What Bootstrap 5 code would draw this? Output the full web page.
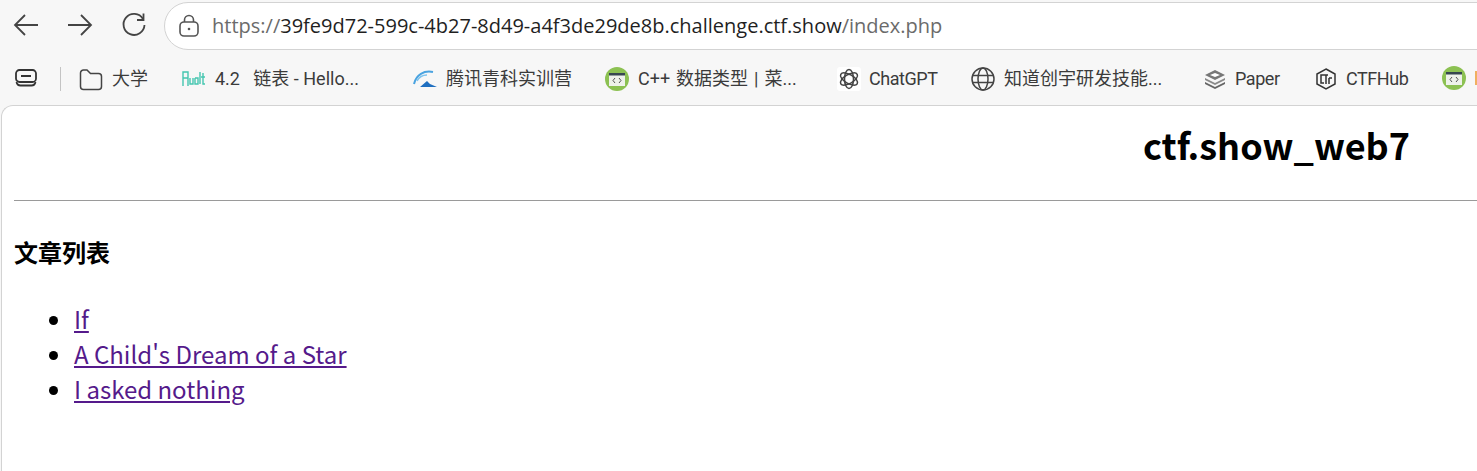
<!DOCTYPE html>
<html lang="zh">
<head>
    <meta charset="UTF-8">
    <meta name="viewport" content="width=device-width, initial-scale=1.0">
    <title>ctf.show_web7</title>
    <link href="https://cdn.jsdelivr.net/npm/bootstrap@5.3.0/dist/css/bootstrap.min.css" rel="stylesheet">
    <style>
        html, body { height: 100%; overflow: hidden; }
        body { background: #f7f7f7; font-family: "Open Sans", "Noto Sans CJK SC", sans-serif; }
        .top-bar { height: 50px; padding-left: 12px; }
        .nav-ico { width: 28px; height: 28px; margin-right: 26px; flex: none; }
        .addr-box { height: 48px; margin: 1px -40px 0 -1px; padding-left: 13px; flex: 1; background: #fff; border: 1px solid #d3d3d3; border-radius: 24px; font-size: 20px; color: #1f1f1f; white-space: nowrap; }
        .addr-dim { color: #6b6b6b; }
        .mark-bar { height: 55px; font-size: 18px; color: #3b3b3b; white-space: nowrap; padding-bottom: 6px; font-family: Roboto, "Noto Sans CJK SC", sans-serif; }
        .mark-item { position: absolute; top: 66px; display: flex; align-items: center; gap: 9px; line-height: 26px; }
        .mark-item svg { width: 24px; height: 24px; flex: none; }
        .mark-tight { letter-spacing: -.45px; gap: 8px; }
        .mark-wide { word-spacing: 1.5px; }
        .mark-sep { position: absolute; left: 60px; top: 67px; width: 1px; height: 24px; background: #c4c4c4; }
        .mark-sliver { width: 2px; height: 14px; background: #f0b060; }
        .page-sheet { height: 366px; background: #fff; border: 1px solid #d3d3d3; border-width: 1px 0 0 1px; border-top-left-radius: 12px; margin-left: 1px; color: #000; font-family: "Noto Sans CJK SC", sans-serif; padding: 0 0 0 12px; }
        .site-title { font-size: 36px; font-weight: 700; line-height: 52px; margin: 12px 67px 0 0; text-align: right; }
        .site-rule { margin: 30px 0 0; border: 0; border-top: 1px solid #9a9a9a; opacity: 1; }
        .list-title { font-size: 24px; font-weight: 700; line-height: 35px; margin: 33px 0 0; }
        .post-list { margin: 32px 0 0; padding-left: 60px; font-size: 24px; line-height: 35px; }
        .post-list a { color: #551a8b; }
    </style>
</head>
<body>
    <!-- browser toolbar -->
    <div class="top-bar d-flex align-items-center">
        <svg class="nav-ico" viewBox="0 0 28 28" fill="none" stroke="#444" stroke-width="1.8"><path d="M26 14H3M13 4L3 14l10 10"/></svg>
        <svg class="nav-ico" viewBox="0 0 28 28" fill="none" stroke="#444" stroke-width="1.8"><path d="M2 14h23M15 4l10 10-10 10"/></svg>
        <svg class="nav-ico" viewBox="0 0 28 28" fill="none" stroke="#444" stroke-width="1.8" style="margin-right:17px"><path d="M23 8a10.500 10.500 0 1 0 1.500 6"/><path d="M23.500 2.500V9H17"/></svg>
        <div class="addr-box d-flex align-items-center">
            <svg width="22" height="24" viewBox="0 0 22 24" fill="none" stroke="#555" stroke-width="1.6" class="me-2"><rect x="2" y="8" width="18" height="14" rx="4"/><path d="M6.500 8V6a4.500 4.500 0 0 1 9 0v2"/><circle cx="11" cy="15" r="1.300" fill="#555" stroke="none"/></svg>
            <span class="ms-1"><span class="addr-dim">https://</span>39fe9d72-599c-4b27-8d49-a4f3de29de8b.challenge.ctf.show<span class="addr-dim">/index.php</span></span>
        </div>
    </div>

    <!-- bookmarks -->
    <div class="mark-bar">
        <div class="mark-item" style="left:14px"><svg viewBox="0 0 24 24" fill="none" stroke="#333" stroke-width="1.800"><rect x="2" y="4" width="20" height="12" rx="3.500"/><path d="M7 10h10" stroke-width="2"/><path d="M2.500 16c.5 2.500 2 3.500 4 3.500h11c2 0 3.500-1 4-3.500"/></svg></div>
        <div class="mark-sep"></div>
        <div class="mark-item" style="left:79px"><svg viewBox="0 0 24 24" fill="none" stroke="#444" stroke-width="1.500"><path d="M1.500 6a3 3 0 0 1 3-3h3.500l3.500 3.500h8a3 3 0 0 1 3 3v10a3 3 0 0 1-3 3h-15a3 3 0 0 1-3-3z"/></svg>大学</div>
        <div class="mark-item" style="left:182px"><svg viewBox="0 0 24 24" fill="none" stroke="#45c6b0" stroke-width="1.400"><path d="M1 19V5h5v14M1 11h5M8 11v6h3v-6M13 11v6h3v-6h-3M18 5v12M21 6v11h2M19 10h4"/></svg>4.2 &nbsp; 链表 - Hello...</div>
        <div class="mark-item" style="left:413px"><svg viewBox="0 0 24 24" fill="none"><path d="M1 17C3 8 11 3 20 5" stroke="#4aa3e0" stroke-width="2"/><path d="M4 14C6 10 10 8 14 8" stroke="#7fc4ee" stroke-width="1.500"/><path d="M7 20l7-6 3 3 7 3z" fill="#1f6fc0"/></svg>腾讯青科实训营</div>
        <div class="mark-item mark-wide" style="left:605px"><svg viewBox="0 0 24 24"><circle cx="12" cy="12" r="12" fill="#8cc152"/><rect x="4" y="6" width="16" height="13" fill="#eef2ea"/><rect x="4" y="6" width="16" height="2.500" fill="#37474f"/><path d="M10 11l-2 2.500 2 2.500M14 11l2 2.500-2 2.500" fill="none" stroke="#555"/></svg>C++ 数据类型 | 菜...</div>
        <div class="mark-item mark-tight" style="left:837px"><svg viewBox="0 0 24 24"><rect width="24" height="24" rx="3" fill="#fff"/><g fill="none" stroke="#444" stroke-width="1.500"><ellipse cx="12" cy="12" rx="4.500" ry="9.500"/><ellipse cx="12" cy="12" rx="4.500" ry="9.500" transform="rotate(60 12 12)"/><ellipse cx="12" cy="12" rx="4.500" ry="9.500" transform="rotate(120 12 12)"/></g></svg>ChatGPT</div>
        <div class="mark-item" style="left:971px"><svg viewBox="0 0 24 24" fill="none" stroke="#444" stroke-width="1.500"><circle cx="12" cy="12" r="11"/><ellipse cx="12" cy="12" rx="5" ry="11"/><path d="M1.500 8.500h21M1.500 15.500h21"/></svg>知道创宇研发技能...</div>
        <div class="mark-item mark-tight" style="left:1203px"><svg viewBox="0 0 24 24"><path d="M12 3l10 5-10 5-10-5z" fill="#777"/><path d="M2 11l10 5 10-5v2l-10 5-10-5z" fill="#8a8a8a"/><path d="M2 15l10 5 10-5v2l-10 5-10-5z" fill="#666"/><path d="M7 8l5-2 5 2-5 2z" fill="#fff"/></svg>Paper</div>
        <div class="mark-item mark-tight" style="left:1314px"><svg viewBox="0 0 24 24" fill="none" stroke="#333" stroke-width="1.500"><path d="M12 2l9 5v10l-9 5-9-5V7z"/><path d="M11 8H7v8h3M9 8h5M12 8v9M15 11h3M15 11v6"/></svg>CTFHub</div>
        <div class="mark-item" style="left:1442px"><svg viewBox="0 0 24 24"><circle cx="12" cy="12" r="12" fill="#8cc152"/><rect x="4" y="6" width="16" height="13" fill="#eef2ea"/><rect x="4" y="6" width="16" height="2.500" fill="#37474f"/><path d="M10 11l-2 2.500 2 2.500M14 11l2 2.500-2 2.500" fill="none" stroke="#555"/></svg><span class="mark-sliver"></span></div>
    </div>

    <!-- page content -->
    <div class="page-sheet">
        <h1 class="site-title">ctf.show_web7</h1>
        <hr class="site-rule">
        <h3 class="list-title">文章列表</h3>
        <ul class="post-list">
            <li><a href="#">If</a></li>
            <li><a href="#">A Child's Dream of a Star</a></li>
            <li><a href="#">I asked nothing</a></li>
        </ul>
    </div>

    <script src="https://cdn.jsdelivr.net/npm/bootstrap@5.3.0/dist/js/bootstrap.bundle.min.js"></script>
</body>
</html>
